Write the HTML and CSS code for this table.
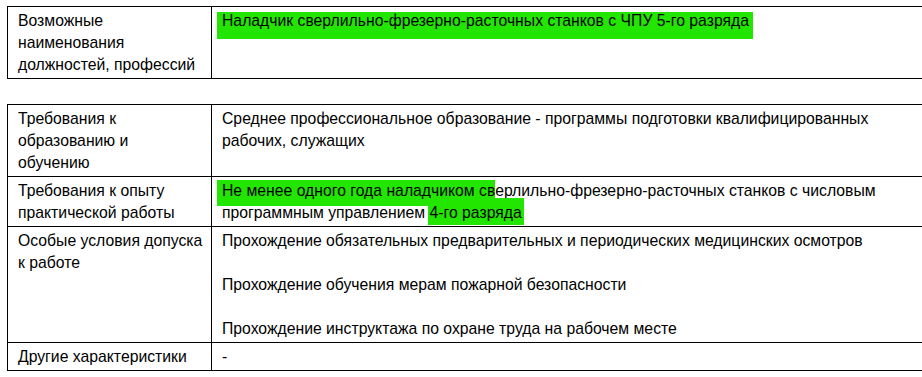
FILE: index.html
```html
<!DOCTYPE html>
<html lang="ru">
<head>
<meta charset="utf-8">
<title>Характеристики</title>
<link rel="stylesheet" href="styles.css">
</head>
<body>
<table class="grid first">
  <colgroup><col class="c1"><col class="c2"></colgroup>
  <tr>
    <td>Возможные наименования должностей, профессий</td>
    <td><span class="hl hl-a">Наладчик сверлильно-фрезерно-расточных станков с ЧПУ 5-го разряда</span></td>
  </tr>
</table>
<table class="grid second">
  <colgroup><col class="c1"><col class="c2"></colgroup>
  <tr>
    <td>Требования к образованию и обучению</td>
    <td>Среднее профессиональное образование - программы подготовки квалифицированных рабочих, служащих</td>
  </tr>
  <tr>
    <td>Требования к опыту практической работы</td>
    <td><span class="hl hl-b">Не менее одного года наладчиком св</span>ерлильно-фрезерно-расточных станков с числовым программным управлением <span class="hl hl-c">4-го разряда</span></td>
  </tr>
  <tr>
    <td>Особые условия допуска к работе</td>
    <td>
      <p class="para">Прохождение обязательных предварительных и периодических медицинских осмотров</p>
      <p class="para">Прохождение обучения мерам пожарной безопасности</p>
      <p class="para">Прохождение инструктажа по охране труда на рабочем месте</p>
    </td>
  </tr>
  <tr>
    <td>Другие характеристики</td>
    <td>-</td>
  </tr>
</table>
</body>
</html>
```
FILE: styles.css
```css
html {
  overflow: hidden;
}
body {
  margin: 0;
  padding: 6px 0 0 7px;
  font-family: "Liberation Sans", Arial, sans-serif;
  font-size: 15.75px;
  line-height: 22px;
  color: #000;
  background: #fff;
}
.grid {
  border-collapse: collapse;
  table-layout: fixed;
  width: 960px;
}
.grid.second {
  margin-top: 25px;
}
.c1 {
  width: 204px;
}
.grid td {
  border: 1px solid #000;
  padding: 3px 7.5px 2px 10px;
  vertical-align: top;
}
.grid td + td {
  padding-right: 70px;
}
.para {
  margin: 0 0 22px 0;
}
.para:last-child {
  margin-bottom: 0;
}
.hl {
  background: #22e600;
  margin-left: -5px;
  padding-left: 5px;
}
.hl-a {
  padding-top: 0;
  padding-bottom: 10px;
  padding-right: 4px;
}
.hl-b {
  padding-top: 2px;
  padding-bottom: 7px;
}
.hl-c {
  margin-left: -2px;
  padding-left: 2px;
  padding-top: 6px;
  padding-bottom: 4px;
  padding-right: 2px;
}
```
